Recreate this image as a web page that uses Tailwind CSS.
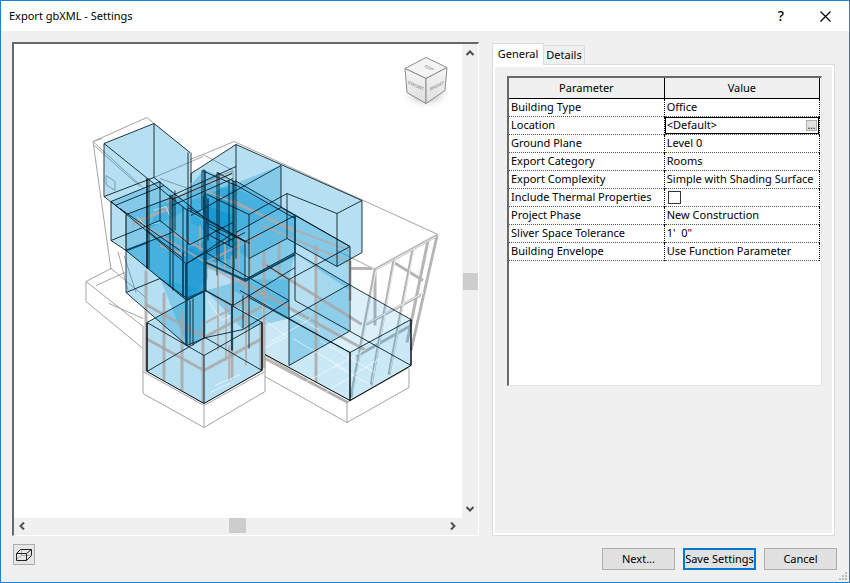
<!DOCTYPE html>
<html lang="en">
<head>
    <meta charset="UTF-8">
    <meta name="viewport" content="width=device-width, initial-scale=1.0">
    <title>Export gbXML - Settings</title>
    <script src="https://cdn.jsdelivr.net/npm/@tailwindcss/browser@4"></script>
</head>
<body class="h-screen overflow-hidden font-['Noto_Sans',sans-serif] text-[11px] leading-4 text-black">
    <div class="relative flex flex-col h-full bg-[#f0f0f0] border border-[#1883d7]">
        <!-- Title bar -->
        <header class="flex items-center h-[30px] shrink-0 bg-white pl-2 pr-4">
            <h1 class="flex-1">Export gbXML - Settings</h1>
            <button type="button" aria-label="Help" class="w-6 h-6 mr-6 text-[14px] font-medium">?</button>
            <button type="button" aria-label="Close" class="w-4 h-6 flex items-center justify-center">
                <svg class="w-[11px] h-[11px]" viewBox="0 0 11 11" fill="none" stroke="#000" stroke-width="1.2"><path d="M.5 .5l10 10M10.500 .5l-10 10"/></svg>
            </button>
        </header>

        <main class="flex flex-1 min-h-0 pt-[11px] pl-[11px] pr-[14px] gap-[13px]">
            <!-- 3D preview -->
            <section class="flex flex-col flex-1 min-w-0 border-t-2 border-l-2 border-t-[#696969] border-l-[#696969] border-r border-b border-r-white border-b-white" aria-label="Analytical model preview">
                <div class="flex flex-1 min-h-0">
                    <div class="flex-1 min-w-0 bg-white">
                        <svg class="block w-full h-full" viewBox="14 44 448 473" fill="none" stroke-linejoin="round">
                            <defs>
                                <linearGradient id="cubeSide" x1="0" y1="0" x2="0" y2="1">
                                    <stop offset="0" stop-color="#f6f6f6"/>
                                    <stop offset="1" stop-color="#dedede"/>
                                </linearGradient>
                                <radialGradient id="cubeShadow">
                                    <stop offset="0" stop-color="#888"/>
                                    <stop offset="1" stop-color="#fff" stop-opacity="0"/>
                                </radialGradient>
                            </defs>

                            <!-- View cube -->
                            <ellipse cx="426" cy="94" rx="26" ry="15" fill="url(#cubeShadow)"/>
                            <g stroke="#8c8c8c" stroke-width="1">
                                <path fill="#f4f4f4" d="M405 68L426 57L447 67L426 78Z"/>
                                <path fill="url(#cubeSide)" d="M405 68L426 78V103L407 92Z"/>
                                <path fill="url(#cubeSide)" d="M447 67L426 78V103L445 90Z"/>
                            </g>
                            <g fill="#999" font-family="Liberation Sans, sans-serif" font-size="5" font-weight="bold" text-anchor="middle">
                                <text transform="matrix(.9 .4 0 1 416 87)">FRONT</text>
                                <text transform="matrix(.9 -.45 0 1 437 87)">RIGHT</text>
                                <text transform="matrix(.9 .4 -.9 .5 427 68)">TOP</text>
                            </g>

                            <!-- Building outline -->
                            <g stroke="#a3a3a3" stroke-width="1">
                                <path d="M93 141L147 117L154 123M93 141L111 269M93 141L144 188M93 144L140 186M111 268L86 281V301L143 348M86 281L143 326M111 268L147 298M96 285L125 272M109 303L143 318"/>
                                <path d="M93 141L102 138M106 175L115 181V190L106 184Z"/>
                                <path d="M190 159L203 154L234 141L438 234L375 269L337 250M203 154L233 170V184M233 170L188 188M188 188L160 178M154 177L203 156"/>
                                <path d="M143 325V393L204 427L265 391V355M143 371L204 405L265 371M204 405V427"/>
                                <path d="M265 355L347 402V422L265 376M347 422L409 387V368M347 402L409 367"/>
                                <path d="M118 251L128 290M124 255L136 292"/>
                            </g>

                            <!-- Leaning facade -->
                            <g stroke="#b5b5b5" stroke-width="3">
                                <path d="M375 269L351 397M375 269V325M394 259L371 385M413 248L389 374M437 235L411 350M428 240L407 342"/>
                                <path d="M375 269L437 235M366 324L425 292M394 262L423 280M356 356L411 325M350 268L372 268"/>
                            </g>
                            <g stroke="#fff" stroke-width=".8">
                                <path d="M376 270L353 392M395 260L372 382M414 249L390 372M434 240L410 345M376 269L436 236M367 323L424 292"/>
                            </g>

                            <!-- Room volumes -->
                            <g fill="#0d98d3" fill-opacity=".3">
                                <path d="M104 143L154 123L190 152V208L148 229L105 196Z"/>
                                <path d="M111 201L160 181L208 218V278L186 300L126 250L111 240Z"/>
                                <path d="M126 214L172 196L206 224V289L186 300L126 250Z"/>
                                <path d="M126 250L172 232L206 260V337L187 345L126 292Z"/>
                                <path d="M236 144L362 200V252L337 266L287 238L249 258L191 222V173Z"/>
                                <path d="M281 165V207L236 232L191 210V200Z"/>
                                <path d="M235 180L350 246V290L295 253L245 279L203 258V198Z"/>
                                <path d="M236 188L295 215L249 240L206 222V205Z"/>
                                <path d="M295 215V253L245 279L206 258V240L245 241Z"/>
                                <path d="M204 169L235 182V232L245 241V279L206 268L186 255V190Z"/>
                                <path d="M188 190L206 182V290L186 300L147 268V230L160 205Z"/>
                                <path d="M206 182L233 190V270L206 258Z"/>
                                <path d="M206 258L245 279L295 252L289 279V318L243 329L206 290Z"/>
                                <path d="M295 252L349 284V331L289 365V318L233 290V275L245 279Z"/>
                                <path d="M147 322L205 290L262 322V370L204 403L147 371Z"/>
                                <path d="M160 278L205 290V337L187 345Z"/>
                                <path d="M265 305L289 318L350 352L411 319V365L350 400L265 354Z" fill-opacity=".22"/>
                                <path d="M349 284L411 319L350 352L289 318Z" fill-opacity=".15"/>
                                <path d="M206 290L262 320V300L289 318V279L245 279Z" fill-opacity=".3"/>
                                <path d="M318 263L349 246V331L318 316Z" fill-opacity=".1"/>
                            </g>
                            <g fill="#0088cc" fill-opacity=".4">
                                <path d="M206 205L233 215V258L206 262Z"/>
                                <path d="M183 250L206 240V288L187 298Z"/>
                            </g>

                            <!-- Curtain wall framing -->
                            <g stroke="#a8a5a4" stroke-opacity=".8" stroke-width="3">
                                <path d="M146 270V371M164 292V380M182 310V390M203 320V402M232 255V378M264 250V368M261 322V370M316 245V382M350 260V300M279 240V276"/>
                                <path d="M146 304L204 337L262 306M146 338L204 370L262 338"/>
                                <path d="M240 280L366 350M262 262L362 324M265 358L348 402"/>
                            </g>
                            <g stroke="#b3a9a6" stroke-opacity=".8" stroke-width="2">
                                <path d="M218 262V350M226 300V360M246 285V365M200 225V250M207 265L245 285M239 230V277M250 240V275M225 240V270M229 345V380"/>
                                <path d="M136 220L206 262L262 233M132 225L170 206M166 202L233 172M206 190L296 230L350 250M206 322L262 292M233 200L296 232"/>
                                <path d="M132 222L170 209M160 245L186 255M262 225L350 262M170 232L205 250"/>
                            </g>

                            <!-- Floor grids and furniture seen through the glass -->
                            <g stroke="#fff" stroke-opacity=".6" stroke-width="1">
                                <path d="M265 320L287 336L265 347M289 312L320 330M270 342L311 318M293 338L347 370M300 385L366 349M320 340L375 372M335 365L372 385M325 392L380 358M215 385L240 374M210 392L230 383"/>
                                <path d="M137 216L145 225L160 222M154 210L166 206L170 216M208 300L222 320L232 314"/>
                            </g>

                            <!-- Room edges -->
                            <g stroke="#02151f" stroke-opacity=".85" stroke-width="1">
                                <path d="M104 143L154 123L190 152M104 143V196M104 143L186 209M154 123V177M104 196L154 177L208 220M104 196L126 213"/>
                                <path d="M111 201L160 181M111 201V240L126 250M115 205L164 185M126 214L172 197M126 250L172 232M111 240L160 220M160 181V220L190 244"/>
                                <path d="M111 201L186 263L206 252M120 208L180 250M172 195V232M175 190V230M147 178V268M149 178V268M170 194V286M173 196V290M183 206V296M187 208V300"/>
                                <path d="M126 250V292L187 345L206 337M126 292L160 278L187 298M126 250L187 300L206 289M187 300V345M190 300V345M193 298V345"/>
                                <path d="M188 152V245M191 152V212M202 170V208M204 169V214M206 195V290M204 195V338M217 172V275M219 172V260M229 180V245M233 180V305M236 144V258M234 182V268"/>
                                <path d="M236 144L362 200V252L337 266V213L287 193V238L337 266M337 213L362 200M281 165V207L236 232M281 165L191 215M281 207L350 246"/>
                                <path d="M236 144L191 173V182M287 193L249 214V258L287 238M249 214L205 193M235 180L350 246V331M235 184L295 218"/>
                                <path d="M295 215V300M295 215L245 241V279L206 262M295 252L245 279M295 254L245 281M245 241L206 222"/>
                                <path d="M170 196L236 166M172 199L232 173M172 205L233 178M202 170L236 185M217 172L236 182"/>
                                <path d="M188 207L245 241M187 209L250 243M187 263L233 233M190 244L233 222M206 252L245 232"/>
                                <path d="M147 322L205 290L262 322L204 355ZM147 371L205 337L262 370M147 322V371M204 355V403M262 322V370M204 290V337"/>
                                <path d="M206 252L233 268L289 300M233 268V305L206 290M249 297V258M249 297L350 352M233 305L295 267"/>
                                <path d="M206 337L243 329L289 300M243 295V328M249 297V348M232 304V350M240 290L289 318L350 352L411 319L349 284L295 252"/>
                                <path d="M267 265L289 279L350 246M289 279V365L349 331M289 318L349 284M295 300L411 365"/>
                                <path d="M350 352V400M411 319V365M147 230L183 258M186 263V300M208 226L233 240M208 234L233 247"/>
                            </g>
                            <g stroke="#004462" stroke-opacity=".8" stroke-width="2">
                                <path d="M205 170V289M208 198V240M183 252V296M186 263V345M232 304V350"/>
                                <path d="M206 262L245 280L295 254M126 250L147 242M187 298L206 290M295 215V252"/>
                            </g>
                            <g stroke="#000" stroke-width="1">
                                <path d="M126 214V250M147 322V371L204 403L262 370V322M350 352V400L411 365V319M265 354L350 400M147 178V268"/>
                            </g>
                        </svg>
                    </div>
                    <!-- Vertical scrollbar -->
                    <div class="relative w-4 flex flex-col justify-between items-center pt-[6px] pb-[6px]" role="scrollbar" aria-orientation="vertical" aria-label="Vertical scroll" aria-valuenow="50">
                        <svg class="w-2 h-[6px]" viewBox="0 0 8 6" fill="none" stroke="#505050" stroke-width="2"><path d="M.5 5L4 1.500L7.500 5"/></svg>
                        <div class="w-[15px] h-[17px] bg-[#cdcdcd]"></div>
                        <svg class="w-2 h-[6px]" viewBox="0 0 8 6" fill="none" stroke="#505050" stroke-width="2"><path d="M.5 1L4 4.500L7.500 1"/></svg>
                    </div>
                </div>
                <!-- Horizontal scrollbar -->
                <div class="flex items-start justify-between h-[17px] pl-[5px] pr-[22px]" role="scrollbar" aria-orientation="horizontal" aria-label="Horizontal scroll" aria-valuenow="50">
                    <svg class="w-[6px] h-2 mt-1" viewBox="0 0 6 8" fill="none" stroke="#505050" stroke-width="2"><path d="M5 .5L1.500 4L5 7.500"/></svg>
                    <div class="w-[17px] h-[15px] bg-[#cdcdcd]"></div>
                    <svg class="w-[6px] h-2 mt-1" viewBox="0 0 6 8" fill="none" stroke="#505050" stroke-width="2"><path d="M1 .5L4.500 4L1 7.500"/></svg>
                </div>
            </section>

            <!-- Settings -->
            <section class="flex flex-col w-[343px] shrink-0">
                <div class="flex items-end h-[22px]" role="tablist">
                    <button type="button" role="tab" aria-selected="true" class="relative z-10 w-[52px] h-[22px] pb-[2px] -mb-px bg-white border border-b-0 border-[#dcdcdc]">General</button>
                    <button type="button" role="tab" aria-selected="false" class="w-[41px] h-[19px] border border-l-0 border-b-0 border-[#dcdcdc]">Details</button>
                </div>
                <div class="flex-1 min-h-0 border border-[#dcdcdc] bg-[#f0f0f0] shadow-[inset_2px_2px_0_#fff,inset_-2px_-2px_0_#fff] pt-[11px] pl-[14px] pr-3" role="tabpanel">
                    <div class="h-[310px] bg-white border-t-2 border-l-2 border-[#696969] border-r border-b border-r-[#e3e3e3] border-b-[#e3e3e3]">
                        <table class="table-fixed border-collapse w-[calc(100%-1px)] whitespace-nowrap">
                            <thead>
                                <tr class="h-5 bg-[#f0f0f0] border-b border-black">
                                    <th class="font-normal border-r border-black p-0">Parameter</th>
                                    <th class="font-normal border-r border-black p-0">Value</th>
                                </tr>
                            </thead>
                            <tbody>
                                <tr class="h-[18px] border-b border-dotted border-[#555]">
                                    <td class="p-0 pl-[2px] border-r border-dotted">Building Type</td>
                                    <td class="p-0 pl-[2px] border-r border-dotted">Office</td>
                                </tr>
                                <tr class="h-[18px] border-b border-dotted border-[#555]">
                                    <td class="p-0 pl-[2px] border-r border-dotted"><label for="location">Location</label></td>
                                    <td class="p-0 border-r border-dotted">
                                        <div class="flex items-center h-[17px] border border-black">
                                            <input id="location" type="text" value="&lt;Default&gt;" class="flex-1 min-w-0 h-[15px] pl-px outline-none">
                                            <button type="button" aria-label="Browse location" class="flex items-center justify-center w-[11px] h-[11px] mr-px bg-[#e1e1e1] border border-[#adadad] text-[10px] leading-none">…</button>
                                        </div>
                                    </td>
                                </tr>
                                <tr class="h-[18px] border-b border-dotted border-[#555]">
                                    <td class="p-0 pl-[2px] border-r border-dotted">Ground Plane</td>
                                    <td class="p-0 pl-[2px] border-r border-dotted">Level 0</td>
                                </tr>
                                <tr class="h-[18px] border-b border-dotted border-[#555]">
                                    <td class="p-0 pl-[2px] border-r border-dotted">Export Category</td>
                                    <td class="p-0 pl-[2px] border-r border-dotted">Rooms</td>
                                </tr>
                                <tr class="h-[18px] border-b border-dotted border-[#555]">
                                    <td class="p-0 pl-[2px] border-r border-dotted">Export Complexity</td>
                                    <td class="p-0 pl-[2px] border-r border-dotted">Simple with Shading Surface</td>
                                </tr>
                                <tr class="h-[18px] border-b border-dotted border-[#555]">
                                    <td class="p-0 pl-[2px] border-r border-dotted"><label for="thermal">Include Thermal Properties</label></td>
                                    <td class="p-0 pl-[3px] border-r border-dotted"><input id="thermal" type="checkbox" class="block appearance-none w-[13px] h-[13px] border border-[#333] bg-white"></td>
                                </tr>
                                <tr class="h-[18px] border-b border-dotted border-[#555]">
                                    <td class="p-0 pl-[2px] border-r border-dotted">Project Phase</td>
                                    <td class="p-0 pl-[2px] border-r border-dotted">New Construction</td>
                                </tr>
                                <tr class="h-[18px] border-b border-dotted border-[#555]">
                                    <td class="p-0 pl-[2px] border-r border-dotted">Sliver Space Tolerance</td>
                                    <td class="p-0 pl-[2px] border-r border-dotted">1'&nbsp; 0"</td>
                                </tr>
                                <tr class="h-[18px] border-b border-dotted border-[#555]">
                                    <td class="p-0 pl-[2px] border-r border-dotted">Building Envelope</td>
                                    <td class="p-0 pl-[2px] border-r border-dotted">Use Function Parameter</td>
                                </tr>
                            </tbody>
                        </table>
                    </div>
                </div>
            </section>
        </main>

        <!-- Buttons -->
        <footer class="flex items-start h-[46px] shrink-0 pt-2 pl-3 pr-3">
            <button type="button" aria-label="Show analytical model" class="flex items-center justify-center w-[22px] h-[21px] bg-[#e6e6e6] border border-[#adadad]">
                <svg class="w-4 h-3" viewBox="0 0 16 12" fill="none" stroke-width="1"><path stroke="#aaa" d="M5.500 .5v6h9M5.500 6.500l-5 4"/><path stroke="#222" d="M.5 4.500h10v7H.5zM.5 4.500l4-4h11l-5 4M15.500 .5v6l-5 5"/></svg>
            </button>
            <div class="flex gap-2 ml-auto pt-1">
                <button type="button" class="w-[73px] h-[22px] bg-[#e1e1e1] border border-[#adadad]">Next...</button>
                <button type="button" class="w-[73px] h-[22px] bg-[#e1e1e1] border-2 border-[#0078d7] whitespace-nowrap">Save Settings</button>
                <button type="button" class="w-[73px] h-[22px] bg-[#e1e1e1] border border-[#adadad]">Cancel</button>
            </div>
        </footer>
        <svg class="absolute right-[2px] bottom-[2px] w-2 h-2" viewBox="0 0 8 8" fill="#bdbdbd"><path d="M6 0h2v2H6zM3 3h2v2H3zM6 3h2v2H6zM0 6h2v2H0zM3 6h2v2H3zM6 6h2v2H6z"/></svg>
    </div>
</body>
</html>
